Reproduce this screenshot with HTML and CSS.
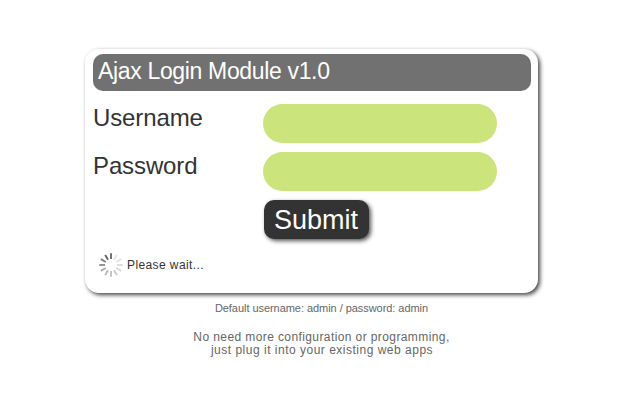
FILE: index.html
```html
<!DOCTYPE html>
<html lang="en">
<head>
<meta charset="utf-8">
<title>Ajax Login Module</title>
<link rel="stylesheet" href="styles.css">
</head>
<body>
<form class="card">
  <h1 class="title">Ajax Login Module v1.0</h1>
  <div class="row"><label for="user">Username</label><input id="user" type="text"></div>
  <div class="row"><label for="pass">Password</label><input id="pass" type="password"></div>
  <button class="submit" type="button">Submit</button>
  <div class="status">
    <svg class="spinner" width="24" height="24" viewBox="-12 -12 24 24" stroke="#333" stroke-width="1.9">
      <path d="M0-6V-11.7" opacity=".72"/>
      <path d="M0-6V-11.7" transform="rotate(30)" opacity=".12"/>
      <path d="M0-6V-11.7" transform="rotate(60)" opacity=".13"/>
      <path d="M0-6V-11.7" transform="rotate(90)" opacity=".16"/>
      <path d="M0-6V-11.7" transform="rotate(120)" opacity=".19"/>
      <path d="M0-6V-11.7" transform="rotate(150)" opacity=".25"/>
      <path d="M0-6V-11.7" transform="rotate(180)" opacity=".3"/>
      <path d="M0-6V-11.7" transform="rotate(210)" opacity=".34"/>
      <path d="M0-6V-11.7" transform="rotate(240)" opacity=".4"/>
      <path d="M0-6V-11.7" transform="rotate(270)" opacity=".55"/>
      <path d="M0-6V-11.7" transform="rotate(300)" opacity=".62"/>
      <path d="M0-6V-11.7" transform="rotate(330)" opacity=".75"/>
    </svg>
    <span class="wait">Please wait...</span>
  </div>
</form>
<p class="hint">Default username: admin / password: admin</p>
<p class="note">No need more configuration or programming,<br><span class="note-end">just plug it into your existing web apps</span></p>
</body>
</html>
```
FILE: styles.css
```css
* { box-sizing: border-box; }
body {
  margin: 0;
  padding-top: 49px;
  background: #fff;
  color: #333;
  font-family: "Liberation Sans", Arial, sans-serif;
}
.card {
  width: 453px;
  height: 244px;
  margin-left: 85px;
  padding: 5px 7px 0 8px;
  border-radius: 14px;
  background: #fff;
  box-shadow: 2px 2px 4px #444;
}
.title {
  height: 37px;
  margin: 0 0 13px;
  padding-left: 5px;
  border-radius: 10px;
  background: #717171;
  color: #fff;
  font-size: 23px;
  font-weight: 400;
  line-height: 35px;
  letter-spacing: -.34px;
}
.row { display: flex; height: 39px; margin-bottom: 9px; }
.row label { width: 170px; font-size: 24px; line-height: 28px; letter-spacing: -.12px; }
.row input {
  width: 234px;
  height: 39px;
  padding: 0 14px;
  border: 0;
  border-radius: 20px;
  background: #cbe57c;
}
.submit {
  display: block;
  width: 105px;
  height: 39px;
  margin-left: 171px;
  padding: 2px 1px 0 0;
  border: 0;
  border-radius: 10px;
  background: #333;
  box-shadow: 2px 2px 4px #555;
  color: #fff;
  font: 27px/37px "Liberation Sans", Arial, sans-serif;
}
.status { display: flex; align-items: center; margin: 14px 0 0 6px; gap: 4px; }
.wait { padding-top: 1px; font-size: 12px; line-height: 23px; letter-spacing: .4px; }
.hint, .note { width: 453px; margin: 0 0 0 85px; text-align: center; color: #666; }
.hint { margin-top: 8px; padding-left: 20px; font-size: 11px; line-height: 14px; letter-spacing: -.05px; }
.note { margin-top: 16px; padding-left: 20px; font-size: 12px; line-height: 13px; letter-spacing: .4px; }
.note-end { padding-left: 1px; letter-spacing: .5px; }
```
